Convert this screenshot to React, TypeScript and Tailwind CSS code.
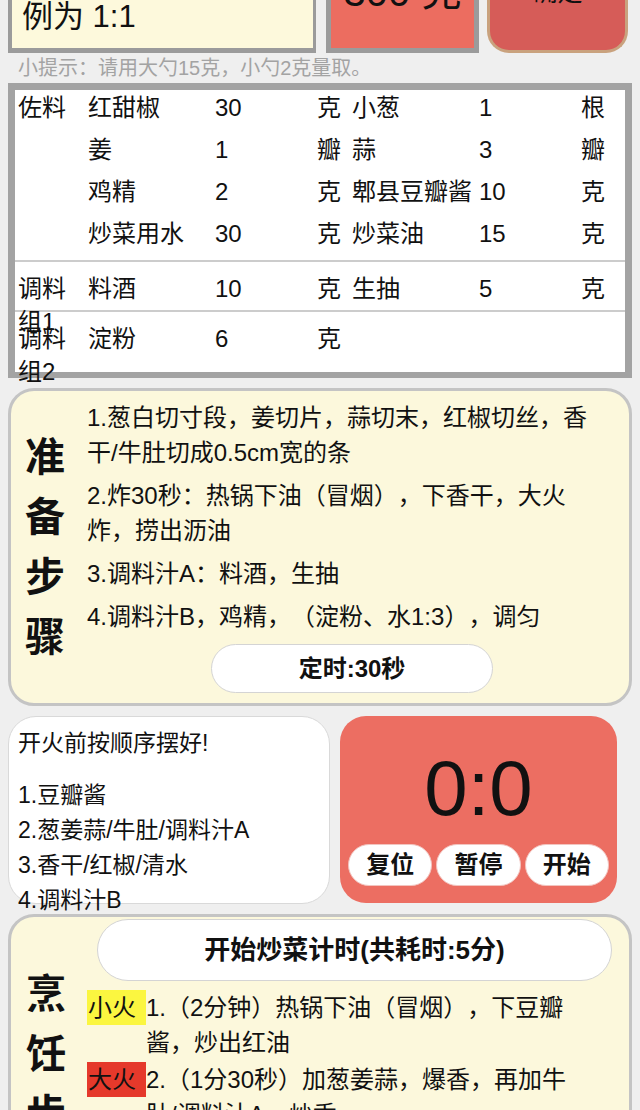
import React from "react";

type Item = { name: string; qty: string; unit: string };

const groups: { label: string; rows: Item[][] }[] = [
  {
    label: "佐料",
    rows: [
      [
        { name: "红甜椒", qty: "30", unit: "克" },
        { name: "小葱", qty: "1", unit: "根" },
      ],
      [
        { name: "姜", qty: "1", unit: "瓣" },
        { name: "蒜", qty: "3", unit: "瓣" },
      ],
      [
        { name: "鸡精", qty: "2", unit: "克" },
        { name: "郫县豆瓣酱", qty: "10", unit: "克" },
      ],
      [
        { name: "炒菜用水", qty: "30", unit: "克" },
        { name: "炒菜油", qty: "15", unit: "克" },
      ],
    ],
  },
  {
    label: "调料组1",
    rows: [
      [
        { name: "料酒", qty: "10", unit: "克" },
        { name: "生抽", qty: "5", unit: "克" },
      ],
    ],
  },
  {
    label: "调料组2",
    rows: [[{ name: "淀粉", qty: "6", unit: "克" }]],
  },
];

const prepSteps = [
  "1.葱白切寸段，姜切片，蒜切末，红椒切丝，香干/牛肚切成0.5cm宽的条",
  "2.炸30秒：热锅下油（冒烟），下香干，大火炸，捞出沥油",
  "3.调料汁A：料酒，生抽",
  "4.调料汁B，鸡精，（淀粉、水1:3），调匀",
];

const orderList = ["1.豆瓣酱", "2.葱姜蒜/牛肚/调料汁A", "3.香干/红椒/清水", "4.调料汁B"];

const cookSteps = [
  { fire: "小火", color: "bg-[#fbf640]", text: "1.（2分钟）热锅下油（冒烟），下豆瓣酱，炒出红油" },
  { fire: "大火", color: "bg-[#e5392b]", text: "2.（1分30秒）加葱姜蒜，爆香，再加牛肚/调料汁A，炒香" },
  { fire: "大火", color: "bg-[#e5392b]", text: "3.（1分钟）加香干、红椒、清水，翻炒" },
];

function Half({ item }: { item?: Item }) {
  if (!item) return <div />;
  return (
    <div className="grid grid-cols-[127px_1fr_auto]">
      <span className="whitespace-nowrap">{item.name}</span>
      <span>{item.qty}</span>
      <span>{item.unit}</span>
    </div>
  );
}

function VerticalTitle({ text }: { text: string }) {
  return (
    <div className="w-[40px] shrink-0 text-[40px] leading-[60px] font-bold text-center">
      {text.split("").map((c, i) => (
        <div key={i}>{c}</div>
      ))}
    </div>
  );
}

export default function App() {
  return (
    <div className="flex flex-col w-[640px] min-h-[1110px] bg-[#efefef] text-[#111] [text-spacing-trim:space-all] font-['Liberation_Sans','Noto_Sans_CJK_SC',sans-serif]">
      {/* top row, scrolled partly out of view */}
      <div className="-mt-[50px] h-[103px] flex px-[8px]">
        <div className="w-[308px] flex items-end bg-[#fdf9dc] border-l-4 border-r-[3px] border-b-[5px] border-[#9b9b9b] pl-[10px] pb-[13px]">
          <span className="text-[31px] leading-[36px]">例为 1:1</span>
        </div>
        <div className="ml-[10px] w-[153px] flex items-end justify-center bg-[#ec6d60] border-x-[5px] border-b-[5px] border-[#9b9b9b] pb-[36px]">
          <span className="text-[40px] leading-[40px]">300 克</span>
        </div>
        <div className="ml-[8px] w-[141px] flex items-end justify-center bg-[#d65c58] border-x-[3px] border-b-[3px] border-[#c9a27e] rounded-b-[22px] pb-[45px]">
          <span className="text-[25px] leading-[25px]">确定</span>
        </div>
      </div>

      <div className="h-[30px] leading-[30px] pl-[18px] text-[20px] text-[#a3a3a3]">
        小提示：请用大勺15克，小勺2克量取。
      </div>

      {/* ingredient table */}
      <div className="mx-[8px] border-[7px] border-b-[6px] border-[#a3a3a3] bg-white text-[24px]">
        {groups.map((g, gi) => {
          const first = gi === 0;
          const last = gi === groups.length - 1;
          return (
            <div
              key={gi}
              className={
                "flex " +
                (first
                  ? "leading-[36px] pb-[2px] border-b-2 border-[#cccccc]"
                  : last
                  ? "leading-[33px] pt-[10px] h-[60px]"
                  : "leading-[33px] pt-[10px] h-[50px] border-b-2 border-[#cccccc]")
              }
            >
              <div className="w-[73px] shrink-0 pl-[3px]">{g.label}</div>
              <div className="w-[517px]">
                {g.rows.map((r, ri) => (
                  <div
                    key={ri}
                    className={"grid grid-cols-[253px_253px] gap-x-[11px] " + (first ? "h-[42px]" : "")}
                  >
                    <Half item={r[0]} />
                    <Half item={r[1]} />
                  </div>
                ))}
              </div>
            </div>
          );
        })}
      </div>

      {/* preparation steps */}
      <div className="mt-[10px] mx-[8px] flex items-center bg-[#fcf8dc] border-[3px] border-[#c4c4c4] rounded-[26px] pl-[14px] pr-[24px] pt-[9px] pb-[10px]">
        <VerticalTitle text="准备步骤" />
        <div className="ml-[22px] flex-1 text-[24px] leading-[35px]">
          {prepSteps.map((s, i) => (
            <p key={i} className={i > 0 ? "mt-[8px]" : ""}>
              {s}
            </p>
          ))}
          <div className="mt-[10px] ml-[124px] w-[282px] h-[49px] flex items-center justify-center bg-white border border-[#d4d4d4] rounded-full text-[24px] font-bold">
            定时:30秒
          </div>
        </div>
      </div>

      {/* order list + timer */}
      <div className="mt-[10px] flex px-[8px] gap-[10px]">
        <div className="w-[322px] h-[188px] bg-white border border-[#d9d9d9] rounded-[28px] pl-[9px] pt-[9px] text-[23px] leading-[35px]">
          <div>开火前按顺序摆好!</div>
          <div className="mt-[17px]">
            {orderList.map((s, i) => (
              <div key={i}>{s}</div>
            ))}
          </div>
        </div>
        <div className="w-[277px] h-[187px] flex flex-col bg-[#ec6e62] rounded-[26px] px-[8px] pt-[33px]">
          <div className="text-[78px] leading-[78px] text-center">0:0</div>
          <div className="mt-[17px] flex gap-[4px]">
            {["复位", "暂停", "开始"].map((b) => (
              <div
                key={b}
                className="flex-1 h-[42px] flex items-center justify-center bg-white border border-[#f2c4bf] rounded-full text-[24px] font-bold"
              >
                {b}
              </div>
            ))}
          </div>
        </div>
      </div>

      {/* cooking steps */}
      <div className="mt-[10px] mx-[8px] mb-[20px] flex items-start bg-[#fcf8dc] border-[3px] border-[#c4c4c4] rounded-[26px] pl-[15px] pr-[17px] pt-[2px] pb-[20px]">
        <div className="pt-[45px]">
          <VerticalTitle text="烹饪步骤" />
        </div>
        <div className="ml-[21px] flex-1">
          <div className="ml-[10px] h-[62px] flex items-center justify-center bg-white border border-[#d4d4d4] rounded-full text-[26px] font-bold">
            开始炒菜计时(共耗时:5分)
          </div>
          <div className="mt-[9px] text-[24px] leading-[35px]">
            {cookSteps.map((s, i) => (
              <div key={i} className={"flex " + (i > 0 ? "mt-[2px]" : "")}>
                <div className={"w-[59px] h-[35px] shrink-0 pl-[1px] " + s.color}>{s.fire}</div>
                <div className="w-[440px]">{s.text}</div>
              </div>
            ))}
          </div>
        </div>
      </div>
    </div>
  );
}
